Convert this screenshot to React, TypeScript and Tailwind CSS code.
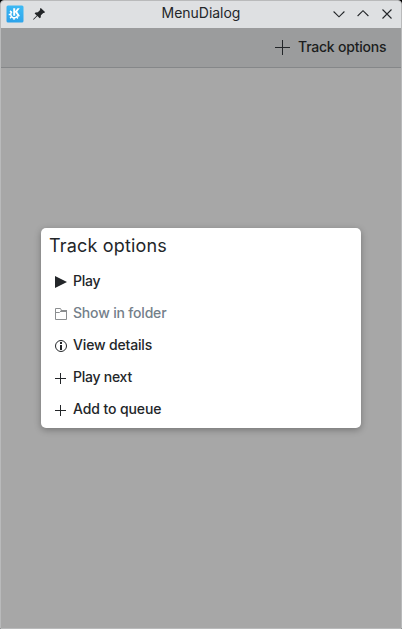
import React from "react";

const font = "font-['Inter','Noto_Sans',sans-serif]";

function Plus({ size }: { size: number }) {
  return (
    <svg width={size} height={size} viewBox={`0 0 ${size} ${size}`} fill="none" stroke="#232629" shapeRendering="crispEdges">
      <path d={`M${Math.floor(size / 2) + 0.5} 0V${size}M0 ${Math.floor(size / 2) + 0.5}H${size}`} />
    </svg>
  );
}

function KdeLogo() {
  return (
    <svg width="18" height="18" viewBox="0 0 18 18">
      <defs>
        <linearGradient id="kde" x1="0" y1="1" x2="0.3" y2="0">
          <stop offset="0" stopColor="#2a9fe9" />
          <stop offset="1" stopColor="#3cb8f3" />
        </linearGradient>
      </defs>
      <rect x="0.5" y="0.5" width="17" height="17" rx="1.5" fill="url(#kde)" />
      <path d="M6 6.6A3.5 3.5 0 1 0 11.4 10.8" fill="none" stroke="#fff" strokeWidth="1.5" />
      <path d="M5.3 7 4 5.9M4.7 9.6H2.7M5.4 11.8 4.1 13.2M8 12.8V14.8M10.5 12 11.9 13.4M11.3 10.5l2 .4" stroke="#fff" strokeWidth="1.5" />
      <path d="M7.2 3.2h2v3.1L11.5 3.2h2.2l-2.5 3.5 2.7 4h-2.3L9.2 7.3v3.4h-2z" fill="#fff" />
    </svg>
  );
}

function Pin() {
  return (
    <svg width="12" height="12" viewBox="0 0 12 12" fill="#232629">
      <path d="M7.8 0 12 4.1 11.2 5 10.3 4.9 7.9 7.3 7.7 9.4 6.7 10.3 4.4 8 .9 11.6.1 11.8.3 11 3.8 7.4 1.6 5.4 2.5 4.5 4.8 4.3 7.1 1.9 7 .8z" />
    </svg>
  );
}

const rows = [
  {
    label: "Play",
    text: "tracking-[-0.25px] text-[#232629]",
    icon: <svg width="12" height="12" viewBox="0 0 12 12"><path d="M0 0 12 6 0 12z" fill="#232629" /></svg>,
  },
  {
    label: "Show in folder",
    text: "tracking-[-0.18px] text-[#74808a]",
    icon: (
      <svg width="12" height="12" viewBox="0 0 12 12" fill="none" stroke="#8b8e90">
        <path d="M.5.5H5.5L6.5 2.5H11.5V11.5H.5zM.5 4.5H4.5L6.5 2.5" />
        <path d="M6 2h6v2H5z" fill="#8b8e90" stroke="none" />
      </svg>
    ),
  },
  {
    label: "View details",
    text: "tracking-[-0.16px] text-[#232629]",
    icon: (
      <svg width="12" height="12" viewBox="0 0 12 12" fill="none" stroke="#232629">
        <circle cx="6" cy="6" r="5.5" />
        <path d="M5 2h2v2H5zM5 5h2v5H5z" fill="#232629" stroke="none" />
      </svg>
    ),
  },
  { label: "Play next", text: "tracking-[-0.25px] text-[#232629]", icon: <span className="block pt-px"><Plus size={11} /></span> },
  { label: "Add to queue", text: "tracking-[-0.1px] text-[#232629]", icon: <span className="block pt-px"><Plus size={11} /></span> },
];

export default function App() {
  return (
    <div className="h-[629px] w-[402px] overflow-hidden bg-black">
      <div className={`flex h-full flex-col overflow-hidden rounded-t-[4px] border border-[#b9babb] bg-[#a7a7a7] ${font}`}>
        <header className="grid h-[27px] shrink-0 grid-cols-3 items-center bg-[#dee0e2]">
          <div className="flex items-center gap-[9px] pb-px pl-[5px]">
            <KdeLogo />
            <Pin />
          </div>
          <h1 className="pb-[3px] text-center text-[14px] leading-[18px] tracking-[-0.02px] text-[#232629]">MenuDialog</h1>
          <div className="flex items-center justify-end gap-3 pb-[2px] pr-2">
            <svg width="12" height="12" viewBox="0 0 12 12" fill="none" stroke="#232629" strokeWidth="1.1"><path d="M.6 3.5 6 8.8 11.4 3.5" /></svg>
            <svg width="12" height="12" viewBox="0 0 12 12" fill="none" stroke="#232629" strokeWidth="1.1"><path d="M.6 8 6 2.7 11.4 8" /></svg>
            <svg width="12" height="12" viewBox="0 0 12 12" fill="none" stroke="#232629" strokeWidth="1.1"><path d="M1.5 1.5 10.5 10.5M10.5 1.5 1.5 10.5" /></svg>
          </div>
        </header>
        <div className="flex h-10 shrink-0 items-center justify-end gap-2 border-b border-[#858789] bg-[#9b9c9d] pr-[14px]">
          <Plus size={15} />
          <span className="w-[89px] whitespace-nowrap pb-[2px] text-[14px] leading-5 font-medium tracking-[-0.22px] text-[#1c1e20]">Track options</span>
        </div>
        <main className="flex flex-1 items-start justify-center pt-[160px]">
          <section className="h-[200px] w-[320px] rounded-[5px] bg-white shadow-[0_2px_7px_rgba(0,0,0,0.3)]">
            <h2 className="h-[37px] whitespace-nowrap pl-2 pt-[5px] text-[18px] leading-[25px] tracking-[0.18px] text-[#232629]">Track options</h2>
            <ul>
              {rows.map((row) => (
                <li key={row.label} className="flex h-8 items-center pl-[14px]">
                  <span className="w-[18px] shrink-0 pt-px">{row.icon}</span>
                  <span className={`whitespace-nowrap text-[14px] leading-5 font-medium ${row.text}`}>{row.label}</span>
                </li>
              ))}
            </ul>
          </section>
        </main>
      </div>
    </div>
  );
}
